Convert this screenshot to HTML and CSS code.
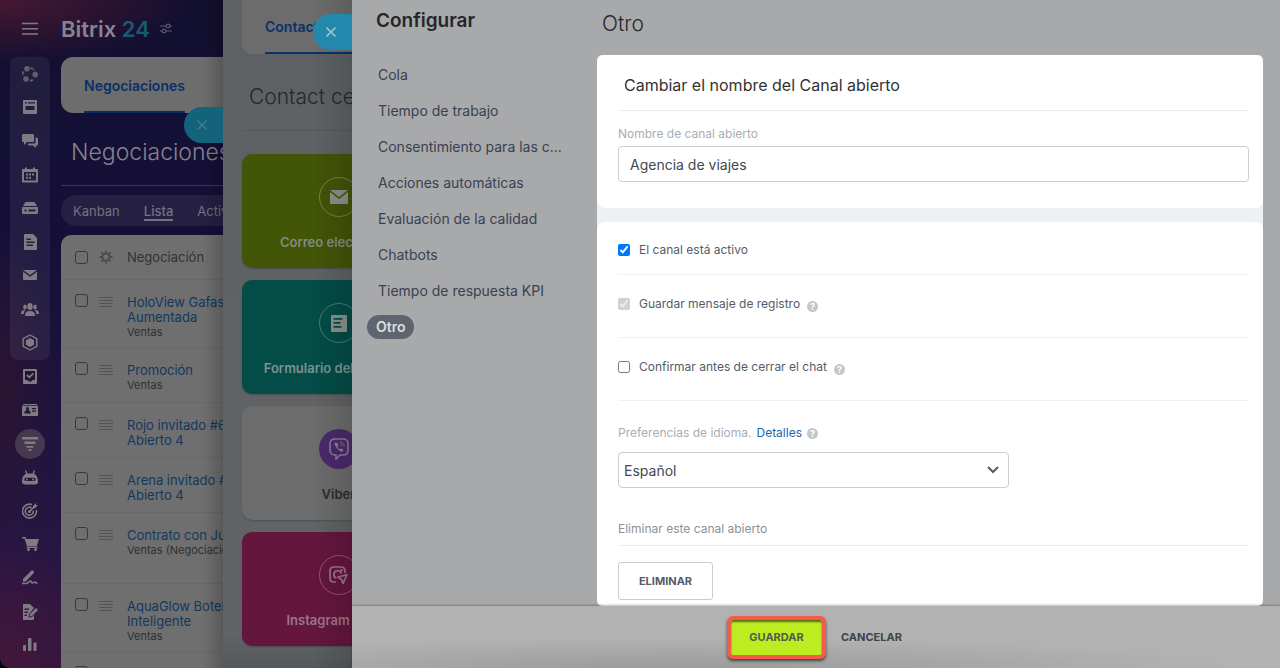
FILE: index.html
```html
<!DOCTYPE html>
<html lang="es">
<head>
<meta charset="utf-8">
<meta name="viewport" content="width=device-width, initial-scale=1">
<title>Bitrix 24 - Configurar canal abierto</title>
<link rel="stylesheet" href="styles.css">
</head>
<body>
<div class="app">
  <div class="crm">
    <nav class="rail" aria-label="Menú principal">
      <button class="rail-menu" aria-label="Menú"><svg width="16" height="14" viewBox="0 0 16 14"><path d="M0 1.5h16M0 6.8h16M0 12h16" fill="none" stroke="currentColor" stroke-width="1.6"/></svg></button>
      <div class="rail-group rail-pinned">
        <a href="#" class="faded" aria-label="Noticias"><svg width="16" height="16" viewBox="0 0 16 16"><circle cx="5" cy="2.8" r="2.8"/><circle cx="13.2" cy="8.6" r="2.8"/><circle cx="4" cy="13" r="2.8"/><path d="M8.5 2c2 .4 3.200 1.300 4 2.800M1.500 5.500C.5 7 .6 8.700 1.300 10M8 14.500c1.800 0 3-.6 4-1.600" fill="none" stroke="currentColor" stroke-width="2" stroke-dasharray="3 1.200"/></svg></a>
        <a href="#" aria-label="Tablero"><svg width="14" height="14" viewBox="0 0 14 14"><path fill-rule="evenodd" d="M1 0h12a1 1 0 0 1 1 1v12a1 1 0 0 1-1 1H1a1 1 0 0 1-1-1V1a1 1 0 0 1 1-1zm1 2.200v1.300h2V2.200zm3 0v1.300h7V2.200zM2.500 6v4h9V6z"/></svg></a>
        <a href="#" aria-label="Chat"><svg width="16" height="16" viewBox="0 0 16 16"><path d="M1 1h10a1 1 0 0 1 1 1v6a1 1 0 0 1-1 1H5l-3 3V9H1a1 1 0 0 1-1-1V2a1 1 0 0 1 1-1z"/><path d="M13.500 4.500H15a1 1 0 0 1 1 1v6a1 1 0 0 1-1 1h-1V15l-3-2.500H7a1 1 0 0 1-1-1v-1h6.500a1 1 0 0 0 1-1z"/></svg></a>
        <a href="#" aria-label="Calendario"><svg width="16" height="16" viewBox="0 0 16 16"><path fill-rule="evenodd" d="M1 2h2V.500h2V2h6V.500h2V2h2a1 1 0 0 1 1 1v11.500a1 1 0 0 1-1 1H1a1 1 0 0 1-1-1V3a1 1 0 0 1 1-1zm1 3v8.500h12V5z"/><path d="M4 6.500h2v2H4zm3 0h2v2H7zm3 0h2v2h-2zM4 9.700h2v2H4zm3 0h2v2H7z"/></svg></a>
        <a href="#" aria-label="Drive"><svg width="16" height="12" viewBox="0 0 16 12"><path d="M3.500 0h9L15 4H1z"/><path fill-rule="evenodd" d="M1 5h14a1 1 0 0 1 1 1v5a1 1 0 0 1-1 1H1a1 1 0 0 1-1-1V6a1 1 0 0 1 1-1zm1.500 2.500v2h2v-2zm4 0v2h7v-2z"/></svg></a>
        <a href="#" aria-label="Documentos"><svg width="13" height="16" viewBox="0 0 13 16"><path fill-rule="evenodd" d="M1 0h8l4 4v11a1 1 0 0 1-1 1H1a1 1 0 0 1-1-1V1a1 1 0 0 1 1-1zm1.500 4.500V6H7V4.500zm0 3V9h8V7.500zm0 3V12H9v-1.500z"/></svg></a>
        <a href="#" aria-label="Correo"><svg width="14" height="10" viewBox="0 0 14 10"><path d="M0 0h14L7 5z"/><path d="M0 1.800 7 6.800l7-5V9a1 1 0 0 1-1 1H1a1 1 0 0 1-1-1z"/></svg></a>
        <a href="#" aria-label="Grupos"><svg width="18" height="13" viewBox="0 0 18 13"><ellipse cx="9" cy="3.500" rx="2.700" ry="3.500"/><path d="M4 13c0-4 2-5 5-5s5 1 5 5z"/><ellipse cx="4" cy="4" rx="1.800" ry="2.600"/><ellipse cx="14" cy="4" rx="1.800" ry="2.600"/><path d="M0 11c0-3 1-4 4.500-4C3 8.500 3 9.500 2.700 11zM18 11c0-3-1-4-4.500-4 1.500 1.500 1.500 2.500 1.800 4z"/></svg></a>
        <a href="#" aria-label="Market"><svg width="16" height="17" viewBox="0 0 16 17"><path d="M8 1l6.800 3.700v7.600L8 16l-6.800-3.700V4.700z" fill="none" stroke="currentColor" stroke-width="1.400" stroke-linejoin="round"/><path d="M8 4l4 2.200v4.600L8 13l-4-2.200V6.200z"/></svg></a>
      </div>
      <div class="rail-group">
        <a href="#" aria-label="Tareas"><svg width="14" height="15" viewBox="0 0 14 15"><path fill-rule="evenodd" d="M1 0h12a1 1 0 0 1 1 1v13a1 1 0 0 1-1 1H1a1 1 0 0 1-1-1V1a1 1 0 0 1 1-1zm1 2v9h2.500l1 1.500h3l1-1.500H12V2z"/><path d="m4 6 2.300 2.300 4-4" fill="none" stroke="currentColor" stroke-width="1.800"/></svg></a>
        <a href="#" aria-label="Contactos"><svg width="16" height="12" viewBox="0 0 16 12"><path d="M1 0h14v1H1z"/><path fill-rule="evenodd" d="M0 1.800h16V11a1 1 0 0 1-1 1H1a1 1 0 0 1-1-1zM5.500 3C4 3 3.800 5 4.500 6.200 3 7 2.300 7.500 2.300 9.500h6.500c0-2-.8-2.500-2.200-3.300C7.300 5 7 3 5.500 3zM10 4v1.200h4V4zm0 2.500v1.200h4V6.500z"/></svg></a>
        <a href="#" class="current" aria-label="CRM"><svg width="16" height="14" viewBox="0 0 16 14"><path d="M0 0h16v2.500H0zm2.500 4.500h11V7h-11zM4.500 9h7v1.800h-7zm2 3.200h3V14h-3z"/></svg></a>
        <a href="#" aria-label="Robots"><svg width="16" height="15" viewBox="0 0 16 15"><path d="m3.500.500 1.500 4M12.500.500 11 4.500" stroke="currentColor" stroke-width="1.500"/><path fill-rule="evenodd" d="M0 12C0 5 3 3.500 8 3.500S16 5 16 12c0 1.500-1 2.500-3 2.500H3c-2 0-3-1-3-2.500zM4 7.800a1.600 1.600 0 0 0 0 3.200h8a1.600 1.600 0 0 0 0-3.200z"/><circle cx="5" cy="9.400" r="1"/><circle cx="11" cy="9.400" r="1"/></svg></a>
        <a href="#" aria-label="Marketing"><svg width="16" height="16" viewBox="0 0 16 16"><g fill="none" stroke="currentColor" stroke-width="1.600"><path d="M10 1.600A7 7 0 1 0 14.400 7"/><path d="M9.500 4.800A4 4 0 1 0 11.300 7.600"/><path d="M7.500 8.500 13 3"/></g><circle cx="7.500" cy="8.500" r="1.500"/><path d="m11 3 3-3v2.200h2l-3 3h-2z"/></svg></a>
        <a href="#" aria-label="Tienda"><svg width="17" height="14" viewBox="0 0 17 14"><path d="M0 0h3.500l.7 2H17l-2.200 7H5L2.500 1.500H0z"/><path d="M4.500 9.500h11V11h-11z"/><circle cx="6.500" cy="12.500" r="1.500"/><circle cx="13.500" cy="12.500" r="1.500"/></svg></a>
        <a href="#" aria-label="Firma"><svg width="16" height="15" viewBox="0 0 16 15"><path d="m1 9 8-8a1.500 1.500 0 0 1 2.500 2.300l-7.500 8L1 12z"/><path d="M0 13.500h4c2 0 3-2.500 4.500-2.500s.5 2 2 2 1-1 2-1 .5 1 3 1" fill="none" stroke="currentColor" stroke-width="1.500"/></svg></a>
        <a href="#" aria-label="Formularios"><svg width="16" height="16" viewBox="0 0 16 16"><path fill-rule="evenodd" d="M1 0h7l4 4-5 6-.5 3.500 3.500-.5 2-2v4a1 1 0 0 1-1 1H1V0zm1.500 4.500V6H7V4.500zm0 3V9H6V7.500zm0 3V12H5v-1.500z"/><path d="m8 10 6-6 2 2-6 6-2.500.500z"/></svg></a>
        <a href="#" aria-label="Analítica"><svg width="14" height="14" viewBox="0 0 14 14"><rect y="7" width="3" height="6" rx="1"/><rect x="5" y="0" width="3.500" height="13" rx="1"/><rect x="10.500" y="4.500" width="3" height="8.500" rx="1"/></svg></a>
      </div>
    </nav>
    <main class="crm-main">
      <header class="brand"><span>Bitrix <b>24</b></span><svg class="outline" width="12" height="11" viewBox="0 0 12 11" stroke-width="1.200"><path d="M0 3h6M10 3h2M0 8h2M6 8h6"/><circle cx="8" cy="3" r="1.800"/><circle cx="4" cy="8" r="1.800"/></svg></header>
      <div class="crm-tabs"><a href="#">Negociaciones</a></div>
      <h1 class="crm-title">Negociaciones</h1>
      <div class="views"><a href="#">Kanban</a><a href="#" class="active">Lista</a><a href="#">Actividades</a></div>
      <table class="deals">
        <thead><tr><th><input type="checkbox" aria-label="Seleccionar todo"></th><th><svg width="14" height="14" viewBox="0 0 14 14" class="gear"><circle cx="7" cy="7" r="3.600" fill="none" stroke="currentColor" stroke-width="2"/><path d="M7 .5v2.500M7 11v2.500M.5 7H3M11 7h2.500M2.400 2.400l1.700 1.700M9.900 9.900l1.700 1.700M11.600 2.400 9.900 4.100M4.100 9.900l-1.700 1.700" stroke="currentColor" stroke-width="2"/></svg></th><th>Negociación</th></tr></thead>
        <tbody>
          <tr class="tall"><td><input type="checkbox" aria-label="HoloView"></td><td><i class="grip"></i></td><td><a href="#">HoloView Gafas<br>Aumentada</a><small>Ventas</small></td></tr>
          <tr><td><input type="checkbox" aria-label="Promoción"></td><td><i class="grip"></i></td><td><a href="#">Promoción</a><small>Ventas</small></td></tr>
          <tr><td><input type="checkbox" aria-label="Rojo invitado"></td><td><i class="grip"></i></td><td><a href="#">Rojo invitado #6<br>Abierto 4</a></td></tr>
          <tr><td><input type="checkbox" aria-label="Arena invitado"></td><td><i class="grip"></i></td><td><a href="#">Arena invitado #<br>Abierto 4</a></td></tr>
          <tr class="taller"><td><input type="checkbox" aria-label="Contrato"></td><td><i class="grip"></i></td><td><a href="#">Contrato con Ju</a><small>Ventas (Negociación)</small></td></tr>
          <tr class="tall"><td><input type="checkbox" aria-label="AquaGlow"></td><td><i class="grip"></i></td><td><a href="#">AquaGlow Botel<br>Inteligente</a><small>Ventas</small></td></tr>
          <tr><td><input type="checkbox" aria-label="Negociación"></td><td></td><td></td></tr>
        </tbody>
      </table>
    </main>
    <button class="close-tab close-crm" aria-label="Cerrar"><svg width="12" height="12" viewBox="0 0 12 12"><path d="m1.500 1.500 9 9m0-9-9 9" stroke="currentColor" stroke-width="1.300"/></svg></button>
  </div>

  <section class="contact">
    <div class="contact-tabs"><a href="#">Contact center</a></div>
    <h2 class="contact-title">Contact center</h2>
    <div class="channels">
      <a href="#" class="channel mail"><span class="disc"><svg width="18" height="14" viewBox="0 0 18 14"><path d="M0 0h18L9 7z"/><path d="m0 2 9 7 9-7v11a1 1 0 0 1-1 1H1a1 1 0 0 1-1-1z"/></svg></span><span>Correo electrónico</span></a>
      <a href="#" class="channel form"><span class="disc"><svg width="16" height="17" viewBox="0 0 16 17"><path fill-rule="evenodd" d="M1 0h14a1 1 0 0 1 1 1v15a1 1 0 0 1-1 1H1a1 1 0 0 1-1-1V1a1 1 0 0 1 1-1zm1.500 3v1.800h9V3zm0 4v1.800h7V7zm0 4v1.800h8V11z"/></svg></span><span>Formulario del sitio web</span></a>
      <a href="#" class="channel viber"><span class="disc"><svg class="outline" width="20" height="22" viewBox="0 0 20 22" stroke-width="1.600"><path d="M6 1h8q5 0 5 5v6q0 5-5 5h-3l-4 4v-4H6q-5 0-5-5V6q0-5 5-5z"/><path d="M6 4.500c-2 2 4.500 10 7.500 9.200l1-1.700-2.500-1.700-1.200 1c-1.300-.6-2-1.600-2.300-2.800l1-1.200-1.300-2.500z" fill="currentColor" stroke="none"/><path d="M11 4c3 .3 4 2 4.200 4M11 6.300c1.400.2 1.800.7 2 1.900" stroke-width="1"/></svg></span><span>Viber</span></a>
      <a href="#" class="channel insta"><span class="disc"><svg class="outline" width="19" height="19" viewBox="0 0 19 19" stroke-width="1.700"><path d="M7 16H5q-4 0-4-4V5q0-4 4-4h7q4 0 4 4v2M7.500 12a3.700 3.700 0 1 1 4.700-4.300"/><path d="m9 11 9-2.300-4 8.800-1.500-4z" stroke-linejoin="round"/><circle cx="12.500" cy="4.300" r=".5"/></svg></span><span>Instagram Direct</span></a>
    </div>
    <button class="close-tab close-contact" aria-label="Cerrar"><svg width="12" height="12" viewBox="0 0 12 12"><path d="m1.500 1.500 9 9m0-9-9 9" stroke="currentColor" stroke-width="1.600"/></svg></button>
  </section>

  <section class="config">
    <div class="config-body">
      <aside class="menu">
        <h2>Configurar</h2>
        <nav>
          <a href="#">Cola</a><a href="#">Tiempo de trabajo</a><a href="#">Consentimiento para las c...</a><a href="#">Acciones automáticas</a><a href="#">Evaluación de la calidad</a><a href="#">Chatbots</a><a href="#">Tiempo de respuesta KPI</a><a href="#" class="selected">Otro</a>
        </nav>
      </aside>
      <form class="content" id="settings">
        <h1>Otro</h1>
        <div class="cards">
          <div class="card name-card">
            <h3>Cambiar el nombre del Canal abierto</h3>
            <label class="caption" for="name">Nombre de canal abierto</label>
            <input class="field" id="name" type="text" value="Agencia de viajes">
          </div>
          <div class="card options">
            <div class="option first"><input type="checkbox" id="active" checked><label for="active">El canal está activo</label></div>
            <div class="option"><input type="checkbox" id="log" checked disabled><label for="log">Guardar mensaje de registro</label><span class="help">?</span></div>
            <div class="option"><input type="checkbox" id="confirm"><label for="confirm">Confirmar antes de cerrar el chat</label><span class="help">?</span></div>
            <div class="language"><label for="lang">Preferencias de idioma.</label><a href="#">Detalles</a><span class="help">?</span></div>
            <select class="field" id="lang"><option>Español</option></select>
            <h4>Eliminar este canal abierto</h4>
            <button type="button" class="delete">Eliminar</button>
          </div>
        </div>
      </form>
    </div>
    <footer class="actions"><button class="save" form="settings">Guardar</button><button class="cancel">Cancelar</button></footer>
  </section>
</div>
</body>
</html>
```
FILE: styles.css
```css
* { box-sizing: border-box; }
body { margin: 0; font: 14px/16px Inter, "Liberation Sans", sans-serif; color: #394150; background: #05040f; }
a { color: inherit; text-decoration: none; }
button { font-family: inherit; border: 0; padding: 0; background: none; color: inherit; }
h1, h2, h3, h4 { margin: 0; font-weight: 400; }
input, select { font-family: inherit; margin: 0; }
svg { display: block; fill: currentColor; }
.outline { fill: none; stroke: currentColor; }
.app { display: flex; height: 100vh; overflow: hidden; }

/* CRM page */
.crm { position: relative; flex: none; display: flex; width: 223px; overflow: hidden; border-bottom-left-radius: 10px; color: #777180;
  background: radial-gradient(ellipse 190px 64px at 0 0, #461832, transparent), radial-gradient(ellipse 100px 130px at 0 100%, #43173b, transparent), radial-gradient(ellipse 60px 160px at 0 58%, #2c1533, transparent), linear-gradient(#130f30, #16103a 40%, #20153f 70%, #2a1643 88%, #301640); }
.crm::after { content: ""; position: absolute; inset: 0 0 0 auto; width: 20px; background: linear-gradient(90deg, transparent, #0003); }
.rail { flex: none; display: flex; flex-direction: column; width: 61px; padding: 0 11px 6px 10px; color: #807b83; }
.rail-menu { height: 57px; display: grid; place-items: center; }
.rail-group { flex: 1; display: grid; grid-auto-rows: 1fr; }
.rail-group a { display: grid; place-items: center; }
.rail-group .faded { color: #625e6c; }
.rail-pinned { background: #ffffff0f; border-radius: 8px; }
.rail-group .current { width: 30px; height: 30px; place-self: center; border-radius: 50%; background: #46384f; }
.crm-main { flex: 1; min-width: 0; white-space: nowrap; }
.brand { display: flex; align-items: center; gap: 10px; height: 57px; font-size: 22px; font-weight: 600; color: #868490; }
.brand b { font-weight: 600; color: #155c73; }
.brand .outline { color: #5d5a6c; }
.crm-tabs { height: 56px; padding-left: 23px; border-radius: 12px 0 0 12px; background: #6d6d6d; }
.crm-tabs a { display: inline-block; height: 56px; border-bottom: 2px solid #0a2d63; color: #0b2f66; font-weight: 600; line-height: 58px; }
.crm-title { height: 73px; padding-left: 10px; border-bottom: 1px solid #3b384d; font-size: 23px; font-weight: 300; line-height: 79px; color: #85838c; }
.views { display: flex; align-items: center; gap: 24px; height: 31px; margin: 9px 0; padding-left: 12px; border-radius: 15px 0 0 15px; background: #252043; font-size: 13px; color: #74717e; }
.views .active { font-weight: 500; border-bottom: 2px solid #74717e; padding-top: 2px; }
.deals { border-spacing: 0; width: 100%; table-layout: fixed; background: #6f6f6f; border-radius: 10px 0 0; font-size: 13px; line-height: 15px; }
.deals tr { height: 55px; }
.deals thead tr { height: 45px; }
.deals .tall { height: 68px; }
.deals .taller { height: 71px; }
.deals td, .deals th { padding: 0; border-bottom: 1px solid #666869; }
.deals td { vertical-align: top; padding-top: 15px; }
.deals th { font-weight: 400; text-align: left; color: #303338; vertical-align: middle; }
.deals th:nth-child(1) { width: 38px; }
.deals th:nth-child(2) { width: 28px; }
.deals tr > :first-child { padding-left: 14px; }
.deals td:first-child { padding-top: 14px; }
.deals input { display: block; appearance: none; width: 13px; height: 13px; border: 1px solid #38393a; border-radius: 3px; }
.deals a { display: block; color: #12385f; }
.deals small { display: block; font-size: 11px; line-height: 14px; color: #303030; }
.gear { color: #4b4e51; }
.grip { display: block; width: 14px; height: 10px; margin-top: 2px; background: repeating-linear-gradient(#525558 0 1px, transparent 1px 3px); }
.close-tab { position: absolute; z-index: 1; right: 0; height: 36px; padding-left: 12px; border-radius: 18px 0 0 18px; }
.close-crm { top: 107px; width: 39px; background: #14637d; color: #4b7f8d; }
.close-contact { top: 14px; width: 39px; background: #2389ac; color: #a4c6d0; }

/* Contact center slider */
.contact { position: relative; flex: none; width: 129px; padding-left: 19px; overflow: hidden; white-space: nowrap; background: linear-gradient(#5e6163, #606466 95%, #55585a); }
.contact::after { content: ""; position: absolute; inset: 0; background: linear-gradient(90deg, transparent 70%, #0002); pointer-events: none; }
.contact-tabs { height: 54px; padding-left: 23px; border-radius: 0 0 0 10px; background: #6c6c6c; }
.contact-tabs a { display: inline-block; height: 54px; border-bottom: 2px solid #0b316b; color: #0b316b; font-weight: 600; line-height: 54px; }
.contact-title { height: 77px; padding-left: 7px; border-bottom: 1px solid #56595b; font-size: 21px; font-weight: 300; line-height: 86px; color: #252729; }
.channels { display: grid; gap: 12px; margin-top: 23px; }
.channel { display: flex; flex-direction: column; align-items: center; gap: 17px; width: 193px; height: 114px; padding-top: 23px; border-radius: 10px; font-size: 13px; font-weight: 600; color: #858b7e; box-shadow: 0 1px 2px #0003; }
.channel.mail { background: #435507; }
.channel.form { background: #034c47; color: #7b9390; }
.channel.viber { background: #6c6c6c; color: #292d33; }
.channel.insta { background: #64163d; color: #9b7588; }
.disc { display: grid; place-items: center; flex: none; width: 40px; height: 40px; border: 1px solid #ffffff44; border-radius: 50%; color: #8c918c; }
.viber .disc { border: 0; background: #4a2a6b; color: #8b7c98; }
.insta .disc { color: #9b7588; }

/* Channel settings slider */
.config { flex: 1; min-width: 0; display: flex; flex-direction: column; background: #a7a9ab; }
.config-body { flex: 1; min-height: 0; display: flex; }
.menu { flex: none; width: 245px; padding: 10px 15px; }
.menu h2 { padding-left: 9px; font-size: 19px; line-height: 22px; font-weight: 600; color: #252628; }
.menu nav { display: flex; flex-direction: column; align-items: flex-start; gap: 12px; padding-top: 31px; line-height: 24px; }
.menu nav a { padding: 0 11px; white-space: nowrap; }
.menu nav .selected { padding: 0 9px; border-radius: 12px; background: #5f6570; color: #ddd; font-weight: 600; }
.content { flex: 1; min-width: 0; display: flex; flex-direction: column; padding-right: 17px; }
.content h1 { height: 55px; padding-left: 5px; font-size: 21px; line-height: 47px; font-weight: 300; color: #27282a; }
.cards { flex: 1; min-height: 0; display: flex; flex-direction: column; gap: 14px; overflow: hidden; background: #edf1f4; border-radius: 5px; }
.card { background: #fff; border-radius: 8px; padding: 0 14px 0 21px; }
.name-card { padding-bottom: 26px; }
.name-card h3 { height: 56px; padding-left: 6px; margin-bottom: 15px; border-bottom: 1px solid #edeeef; font-size: 16px; line-height: 61px; color: #333; }
.caption { display: block; margin-bottom: 4px; font-size: 12px; color: #a8adb4; }
.field { display: block; width: 100%; height: 36px; padding: 0 11px; border: 1px solid #c6cdd3; border-radius: 4px; background: #fff; font-size: 14px; color: #414855; }
.options { flex: 1; font-size: 12px; }
.option { display: flex; align-items: center; gap: 9px; height: 63px; padding-bottom: 4px; border-bottom: 1px solid #eef0f2; color: #535c69; }
.option.first { height: 53px; padding: 4px 0 0; }
.option input { width: 12px; height: 12px; accent-color: #0075ff; }
.option .help { margin: 5px 0 0 -2px; }
.help { display: grid; place-items: center; width: 11px; height: 11px; border-radius: 50%; background: #c3c7cb; color: #fff; font-size: 9px; line-height: 11px; font-weight: 700; }
.language { display: flex; align-items: center; gap: 5px; margin: 24px 0 11px; color: #a8adb4; }
.language a { color: #2067b0; }
select.field { width: 62%; padding: 0 5px; appearance: none; background: #fff url("data:image/svg+xml,%3Csvg xmlns='http://www.w3.org/2000/svg' width='12' height='8'%3E%3Cpath d='m1 1 5 5 5-5' fill='none' stroke='%23525c69' stroke-width='2'/%3E%3C/svg%3E") right 9px center no-repeat; }
.options h4 { margin: 33px 0 16px; padding-bottom: 8px; border-bottom: 1px solid #edeeef; font-size: 12px; color: #8b919b; line-height: 16px; }
.delete { width: 95px; height: 38px; border: 1px solid #c6cdd3; border-radius: 3px; color: #535c69; font-size: 11px; font-weight: 700; text-transform: uppercase; }
.actions { flex: none; display: flex; align-items: center; justify-content: center; gap: 15px; height: 62px; padding-right: 3px; background: radial-gradient(ellipse 60% 30px at 35% 100%, #9b9b9b, transparent), #b2b2b2; box-shadow: 0 -1px 2px #0004; z-index: 1; }
.actions button { text-transform: uppercase; font-size: 11px; font-weight: 700; }
.actions .save { width: 99px; height: 43px; border: 4px solid #f45b4a; border-radius: 6px; background: #bbed21; color: #535c49; box-shadow: 0 2px 3px #0009, inset 0 2px 2px #0008; }
.actions .cancel { color: #3d424b; }
```
